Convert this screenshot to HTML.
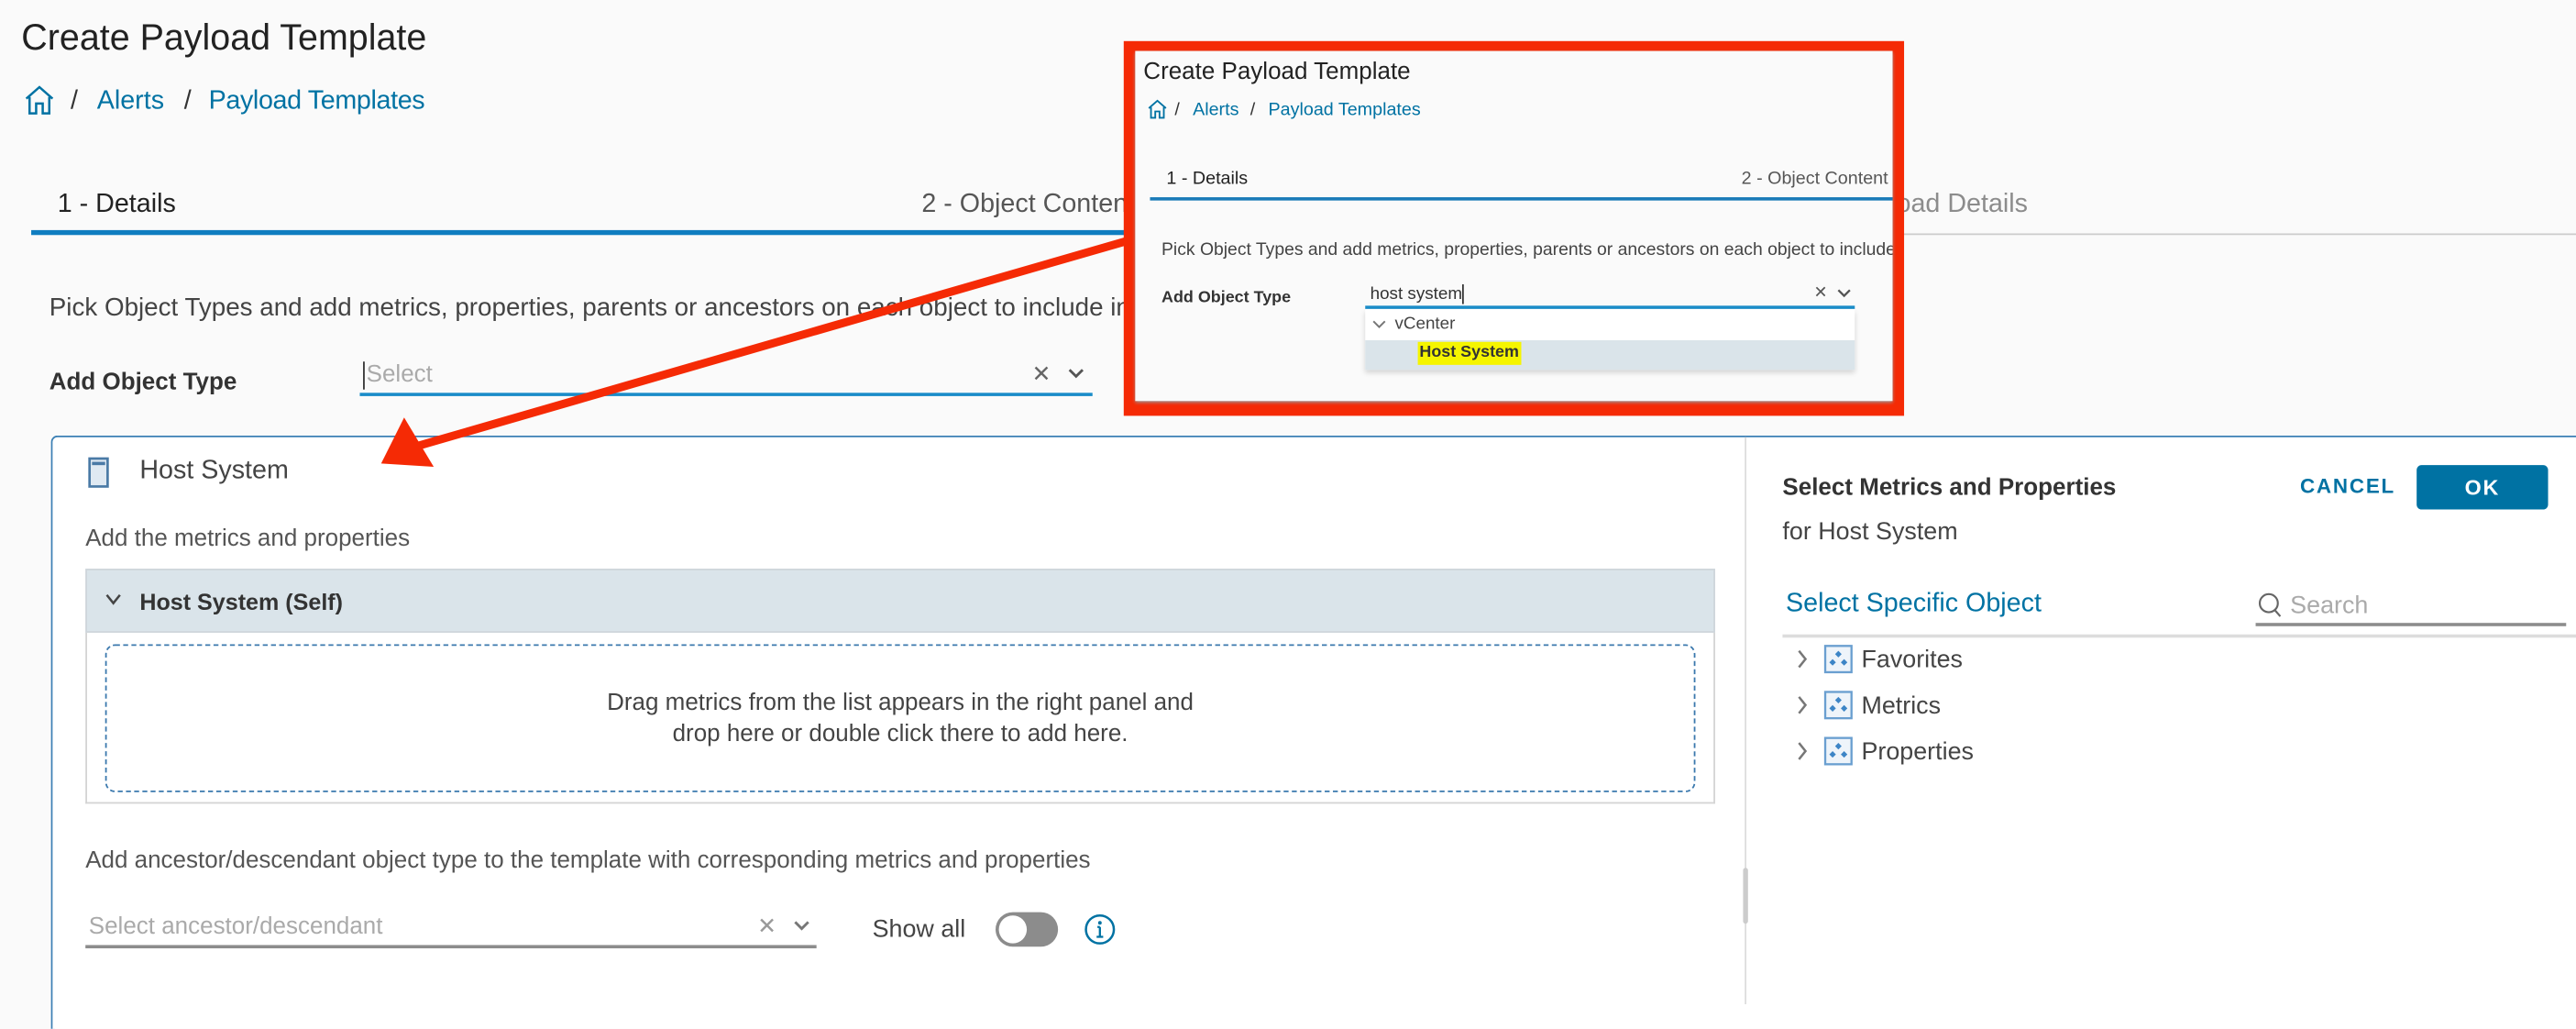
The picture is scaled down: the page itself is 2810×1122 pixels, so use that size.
<!DOCTYPE html>
<html><head><meta charset="utf-8">
<style>
html,body{margin:0;padding:0;width:2810px;height:1094px;overflow:hidden;background:#fafafa;}
#s{position:absolute;left:0;top:0;width:1568px;height:611px;transform:scale(1.7921);transform-origin:0 0;font-family:"Liberation Sans",sans-serif;color:#333;}
.a{position:absolute;white-space:nowrap;}
.blue{color:#0072a3;}
</style></head><body>
<div id="s">
<div class="a" style="left:13px;top:11px;font-size:22px;line-height:24px;color:#222;">Create Payload Template</div>
<svg class="a" style="left:14px;top:51px" width="20" height="20" viewBox="0 0 20 20"><path d="M2 9 L10 2 L18 9 M4 8 V18 H8 V12 H12 V18 H16 V8" fill="none" stroke="#0072a3" stroke-width="1.4"/></svg>
<div class="a" style="left:43px;top:53px;font-size:16px;line-height:18px;">/</div>
<div class="a blue" style="left:59px;top:53px;font-size:16px;line-height:18px;">Alerts</div>
<div class="a" style="left:112px;top:53px;font-size:16px;line-height:18px;">/</div>
<div class="a blue" style="left:127px;top:53px;font-size:16px;line-height:18px;letter-spacing:-0.2px;">Payload Templates</div>
<div class="a" style="left:35px;top:116px;font-size:16px;line-height:18px;color:#222;">1 - Details</div>
<div class="a" style="left:561px;top:116px;font-size:16px;line-height:18px;color:#565656;">2 - Object Content</div>
<div class="a" style="left:1100px;top:116px;font-size:16px;line-height:18px;color:#8c8c8c;">3 - Payload Details</div>
<div class="a" style="left:19px;top:140px;width:690px;height:3px;background:#0f7dc0;"></div>
<div class="a" style="left:709px;top:142px;width:859px;height:1px;background:#ccc;"></div>
<div class="a" style="left:30px;top:179px;font-size:15.5px;line-height:18px;color:#444;">Pick Object Types and add metrics, properties, parents or ancestors on each object to include in the payload.</div>
<div class="a" style="left:30px;top:225px;font-size:14.5px;line-height:17px;font-weight:bold;color:#333;">Add Object Type</div>
<div class="a" style="left:219px;top:219px;width:446px;height:20px;border-bottom:2px solid #1a8cc8;"></div>
<div class="a" style="left:221px;top:220px;width:1px;height:17px;background:#333;"></div>
<div class="a" style="left:223px;top:220px;font-size:14.5px;line-height:17px;color:#aaa;">Select</div>
<div class="a" style="left:628px;top:219px;font-size:14px;line-height:17px;color:#666;">✕</div>
<svg class="a" style="left:649px;top:222px" width="12" height="10"><path d="M2 3 L6 7 L10 3" fill="none" stroke="#555" stroke-width="1.6"/></svg>

<div class="a" style="left:31px;top:265px;width:1560px;height:360px;border-top:1px solid #3b7fb4;border-left:1px solid #3b7fb4;border-top-left-radius:4px;background:#fff;"></div>
<div class="a" style="left:1062px;top:266px;width:1px;height:345px;background:#ddd;"></div>
<div class="a" style="left:1061px;top:528px;width:3px;height:34px;background:#ccc;border-radius:2px;"></div>
<svg class="a" style="left:53px;top:278px" width="14" height="20"><rect x="1.5" y="1" width="11" height="17" fill="#dfe9f2" stroke="#4a7aa6" stroke-width="1.5"/><rect x="3" y="3" width="8" height="2" fill="#4a7aa6"/></svg>
<div class="a" style="left:85px;top:278px;font-size:16px;line-height:18px;color:#444;">Host System</div>
<div class="a" style="left:52px;top:320px;font-size:14.5px;line-height:17px;color:#555;">Add the metrics and properties</div>
<div class="a" style="left:52px;top:346px;width:992px;height:39px;background:#dae4ea;border:1px solid #cfd6db;box-sizing:border-box;"></div>
<svg class="a" style="left:63px;top:360px" width="12" height="10"><path d="M2 2 L6 7 L10 2" fill="none" stroke="#444" stroke-width="1.4"/></svg>
<div class="a" style="left:85px;top:358px;font-size:14px;line-height:17px;font-weight:bold;color:#333;">Host System (Self)</div>
<div class="a" style="left:52px;top:385px;width:992px;height:104px;background:#fff;border:1px solid #d4d4d4;border-top:none;box-sizing:border-box;"></div>
<div class="a" style="left:64px;top:392px;width:968px;height:90px;border:1.5px dashed #3a78ad;border-radius:6px;box-sizing:border-box;"></div>
<div class="a" style="left:64px;top:419px;width:968px;text-align:center;font-size:14.5px;line-height:19px;color:#444;white-space:normal;">Drag metrics from the list appears in the right panel and<br>drop here or double click there to add here.</div>
<div class="a" style="left:52px;top:516px;font-size:14.5px;line-height:17px;color:#555;">Add ancestor/descendant object type to the template with corresponding metrics and properties</div>
<div class="a" style="left:52px;top:553px;width:445px;height:22px;border-bottom:2px solid #8c8c8c;"></div>
<div class="a" style="left:54px;top:556px;font-size:14.5px;line-height:17px;color:#aaa;">Select ancestor/descendant</div>
<div class="a" style="left:461px;top:555px;font-size:14px;line-height:17px;color:#999;">✕</div>
<svg class="a" style="left:482px;top:558px" width="12" height="10"><path d="M2 3 L6 7 L10 3" fill="none" stroke="#777" stroke-width="1.6"/></svg>
<div class="a" style="left:531px;top:557px;font-size:15px;line-height:18px;color:#444;">Show all</div>
<div class="a" style="left:606px;top:555px;width:38px;height:21px;border-radius:11px;background:#8c8c8c;"></div>
<div class="a" style="left:608px;top:557px;width:17px;height:17px;border-radius:50%;background:#fff;"></div>
<svg class="a" style="left:659px;top:555px" width="21" height="21"><circle cx="10.5" cy="10.5" r="8.5" fill="none" stroke="#0072a3" stroke-width="1.4"/><circle cx="10.5" cy="6.5" r="1.1" fill="#0072a3"/><path d="M10.5 9 V15 M8.5 15 H12.5 M9 9 H10.5" stroke="#0072a3" stroke-width="1.3" fill="none"/></svg>

<div class="a" style="left:1085px;top:288px;font-size:14.5px;line-height:18px;font-weight:bold;color:#333;">Select Metrics and Properties</div>
<div class="a" style="left:1085px;top:315px;font-size:15px;line-height:18px;color:#444;">for Host System</div>
<div class="a" style="left:1400px;top:289px;font-size:12.5px;line-height:15px;font-weight:bold;color:#0072a3;letter-spacing:1px;">CANCEL</div>
<div class="a" style="left:1471px;top:283px;width:80px;height:27px;background:#0072a3;border-radius:3px;color:#fff;font-size:13px;font-weight:bold;line-height:27px;text-align:center;letter-spacing:1px;">OK</div>
<div class="a blue" style="left:1087px;top:359px;font-size:16px;line-height:18px;">Select Specific Object</div>
<svg class="a" style="left:1374px;top:360px" width="16" height="17"><circle cx="7" cy="7" r="5.5" fill="none" stroke="#666" stroke-width="1.2"/><path d="M10.5 11 L14 15" stroke="#666" stroke-width="1.2"/></svg>
<div class="a" style="left:1394px;top:360px;font-size:15px;line-height:18px;color:#aaa;">Search</div>
<div class="a" style="left:1373px;top:379px;width:189px;height:2px;background:#8c8c8c;"></div>
<div class="a" style="left:1085px;top:386px;width:483px;height:2px;background:#ddd;"></div>
<svg class="a" style="left:1092px;top:393px" width="10" height="16"><path d="M3 3 L7 8 L3 13" fill="none" stroke="#777" stroke-width="1.4"/></svg>
<svg class="a" style="left:1092px;top:421px" width="10" height="16"><path d="M3 3 L7 8 L3 13" fill="none" stroke="#777" stroke-width="1.4"/></svg>
<svg class="a" style="left:1092px;top:449px" width="10" height="16"><path d="M3 3 L7 8 L3 13" fill="none" stroke="#777" stroke-width="1.4"/></svg>
<svg class="a" style="left:1110px;top:392px" width="18" height="18"><rect x="1" y="1" width="16" height="16" fill="#eef4fa" stroke="#6a9fd0" stroke-width="1.3"/><path d="M9 4 L11 6 L9 8 L7 6Z M5.5 9 L7.5 11 L5.5 13 L3.5 11Z M12.5 9 L14.5 11 L12.5 13 L10.5 11Z" fill="#3d85c6"/></svg>
<svg class="a" style="left:1110px;top:420px" width="18" height="18"><rect x="1" y="1" width="16" height="16" fill="#eef4fa" stroke="#6a9fd0" stroke-width="1.3"/><path d="M9 4 L11 6 L9 8 L7 6Z M5.5 9 L7.5 11 L5.5 13 L3.5 11Z M12.5 9 L14.5 11 L12.5 13 L10.5 11Z" fill="#3d85c6"/></svg>
<svg class="a" style="left:1110px;top:448px" width="18" height="18"><rect x="1" y="1" width="16" height="16" fill="#eef4fa" stroke="#6a9fd0" stroke-width="1.3"/><path d="M9 4 L11 6 L9 8 L7 6Z M5.5 9 L7.5 11 L5.5 13 L3.5 11Z M12.5 9 L14.5 11 L12.5 13 L10.5 11Z" fill="#3d85c6"/></svg>
<div class="a" style="left:1133px;top:393px;font-size:15px;line-height:18px;color:#444;">Favorites</div>
<div class="a" style="left:1133px;top:421px;font-size:15px;line-height:18px;color:#444;">Metrics</div>
<div class="a" style="left:1133px;top:449px;font-size:15px;line-height:18px;color:#444;">Properties</div>

<div class="a" style="left:684px;top:25px;width:475px;height:228px;background:#f52a05;"></div>
<div class="a" style="left:691px;top:31px;width:461px;height:213px;background:#fafafa;box-shadow:0 1px 2px #999;overflow:hidden;">
  <div class="a" style="left:5px;top:5px;font-size:14.5px;line-height:17px;color:#222;">Create Payload Template</div>
  <svg class="a" style="left:7px;top:29px" width="13" height="13" viewBox="0 0 20 20"><path d="M2 9 L10 2 L18 9 M4 8 V18 H8 V12 H12 V18 H16 V8" fill="none" stroke="#0072a3" stroke-width="1.6"/></svg>
  <div class="a" style="left:24px;top:30px;font-size:11px;line-height:13px;">/</div>
  <div class="a blue" style="left:35px;top:30px;font-size:11px;line-height:13px;">Alerts</div>
  <div class="a" style="left:70px;top:30px;font-size:11px;line-height:13px;">/</div>
  <div class="a blue" style="left:81px;top:30px;font-size:11px;line-height:13px;">Payload Templates</div>
  <div class="a" style="left:19px;top:72px;font-size:11px;line-height:13px;color:#222;">1 - Details</div>
  <div class="a" style="left:369px;top:72px;font-size:11px;line-height:13px;color:#565656;">2 - Object Content</div>
  <div class="a" style="left:9px;top:89px;width:452px;height:2px;background:#1a7bb8;"></div>
  <div class="a" style="left:16px;top:115px;font-size:10.8px;line-height:13px;color:#444;">Pick Object Types and add metrics, properties, parents or ancestors on each object to include</div>
  <div class="a" style="left:16px;top:145px;font-size:10px;line-height:12px;font-weight:bold;color:#333;">Add Object Type</div>
  <div class="a" style="left:143px;top:142px;font-size:10.5px;line-height:13px;color:#333;">host system</div>
  <div class="a" style="left:199px;top:142px;width:1px;height:12px;background:#333;"></div>
  <div class="a" style="left:413px;top:141px;font-size:10px;line-height:13px;color:#555;">✕</div>
  <svg class="a" style="left:427px;top:144px" width="9" height="7"><path d="M1 1.5 L4.5 5 L8 1.5" fill="none" stroke="#555" stroke-width="1.3"/></svg>
  <div class="a" style="left:140px;top:155px;width:298px;height:2px;background:#1a8cc8;"></div>
  <div class="a" style="left:140px;top:157px;width:298px;height:37px;background:#fff;box-shadow:0 2px 3px rgba(0,0,0,.15);"></div>
  <svg class="a" style="left:144px;top:163px" width="9" height="7"><path d="M1 1.5 L4.5 5 L8 1.5" fill="none" stroke="#777" stroke-width="1.1"/></svg>
  <div class="a" style="left:158px;top:160px;font-size:10.5px;line-height:13px;color:#444;">vCenter</div>
  <div class="a" style="left:140px;top:176px;width:298px;height:18px;background:#dae4ea;"></div>
  <div class="a" style="left:172px;top:177px;font-size:10px;line-height:14px;font-weight:bold;color:#333;background:#f5f500;padding:0 1px;">Host System</div>
</div>

<svg class="a" style="left:0;top:0" width="1568" height="611">
  <line x1="688" y1="146" x2="252" y2="272" stroke="#f52a05" stroke-width="5"/>
  <polygon points="232,282 246,254 264,284" fill="#f52a05"/>
</svg>
</div>
</body></html>
